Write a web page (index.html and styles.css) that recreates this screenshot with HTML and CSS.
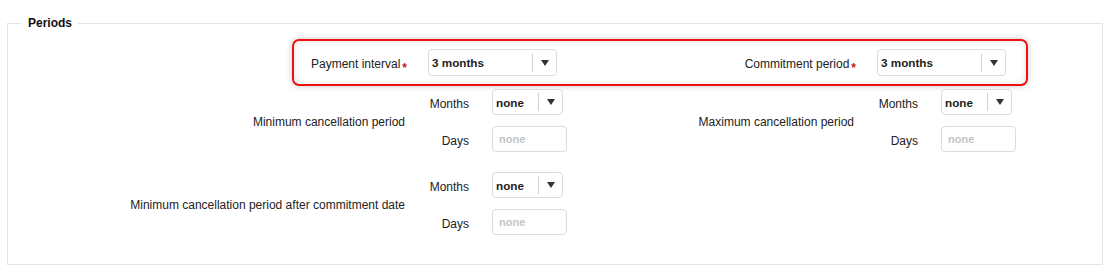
FILE: index.html
```html
<!DOCTYPE html>
<html>
    <head>
        <title>Periods</title>
        <meta charset="UTF-8">
        <meta name="viewport" content="width=device-width, initial-scale=1.0">
        <link rel="stylesheet" href="styles.css">
    </head>
    <body>

        <fieldset class="periods">
            <legend>Periods</legend>

            <div class="highlight">
                <div class="field">
                    <label class="field-label">Payment interval<span class="req">*</span></label>
                    <div class="select wide">
                        <span class="select-value">3 months</span>
                        <span class="select-arrow"></span>
                    </div>
                </div>
                <div class="field">
                    <label class="field-label">Commitment period<span class="req">*</span></label>
                    <div class="select wide">
                        <span class="select-value">3 months</span>
                        <span class="select-arrow"></span>
                    </div>
                </div>
            </div>

            <div class="ranges">
                <div class="range">
                    <div class="range-label">Minimum cancellation period</div>
                    <div class="range-parts">
                        <div class="part">
                            <span class="part-label">Months</span>
                            <div class="select narrow">
                                <span class="select-value">none</span>
                                <span class="select-arrow"></span>
                            </div>
                        </div>
                        <div class="part">
                            <span class="part-label">Days</span>
                            <input class="days" type="text" placeholder="none">
                        </div>
                    </div>
                </div>

                <div class="range">
                    <div class="range-label">Maximum cancellation period</div>
                    <div class="range-parts">
                        <div class="part">
                            <span class="part-label">Months</span>
                            <div class="select narrow">
                                <span class="select-value">none</span>
                                <span class="select-arrow"></span>
                            </div>
                        </div>
                        <div class="part">
                            <span class="part-label">Days</span>
                            <input class="days" type="text" placeholder="none">
                        </div>
                    </div>
                </div>

                <div class="range">
                    <div class="range-label">Minimum cancellation period after commitment date</div>
                    <div class="range-parts">
                        <div class="part">
                            <span class="part-label">Months</span>
                            <div class="select narrow">
                                <span class="select-value">none</span>
                                <span class="select-arrow"></span>
                            </div>
                        </div>
                        <div class="part">
                            <span class="part-label">Days</span>
                            <input class="days" type="text" placeholder="none">
                        </div>
                    </div>
                </div>
            </div>
        </fieldset>

    </body>
</html>
```

FILE: styles.css
```css
body {
    margin: 0;
    background: #fff;
    font-family: "Liberation Sans", Arial, sans-serif;
    font-size: 12px;
    color: #222;
}

fieldset.periods {
    margin: 16px 11px 0 7px;
    padding: 9px 0 29px 0;
    border: 1px solid #e4e4e4;
    min-width: 0;
}

fieldset.periods > legend {
    margin-left: 13px;
    padding: 0 6px 0 7px;
    font-weight: bold;
    font-size: 12px;
    line-height: 14px;
    color: #111;
}

/* highlighted row */
.highlight {
    display: grid;
    grid-template-columns: 449px 263px;
    width: max-content;
    margin-left: 284px;
    padding: 8px 20px 8px 0;
    border: 2px solid #f01010;
    border-radius: 7px;
    box-shadow: 0 0 6px rgba(0, 0, 0, 0.22), inset 0 0 6px rgba(0, 0, 0, 0.12);
}

.field {
    display: flex;
    align-items: center;
}

.field-label {
    width: 113px;
    margin-right: 21px;
    padding-top: 3px;
    line-height: 14px;
    text-align: right;
    white-space: nowrap;
}

.req {
    margin-left: 2px;
    color: #d01010;
    font-weight: bold;
    font-size: 12px;
    line-height: 0;
    vertical-align: -4px;
}

/* selects */
.select {
    display: flex;
    align-items: center;
    box-sizing: border-box;
    height: 27px;
    border: 1px solid #dcdcdc;
    border-radius: 4px;
    background: #fff;
}

.select.wide { width: 129px; }
.select.narrow { width: 71px; height: 26px; }

.select-value {
    flex: 1;
    padding-left: 3px;
    font-weight: bold;
    font-size: 11.7px;
    color: #1e1e1e;
}

.select-arrow {
    display: flex;
    align-items: center;
    justify-content: center;
    width: 23px;
    height: 18px;
    border-left: 1px solid #d0d0d0;
}

.select-arrow::after {
    content: "";
    border-top: 6px solid #333;
    border-left: 4px solid transparent;
    border-right: 4px solid transparent;
}

/* cancellation periods */
.ranges {
    display: grid;
    grid-template-columns: 449px 449px;
    row-gap: 20px;
    margin: 3px 0 0 112px;
}

.range {
    display: flex;
    align-items: center;
}

.range-label {
    width: 285px;
    padding-top: 3px;
    text-align: right;
    white-space: nowrap;
}

.range-parts {
    display: flex;
    flex-direction: column;
    gap: 11px;
}

.part {
    display: flex;
    align-items: center;
}

.part-label {
    width: 64px;
    margin-right: 23px;
    padding-top: 3px;
    text-align: right;
}

input.days {
    box-sizing: border-box;
    width: 75px;
    height: 26px;
    margin: 0;
    padding: 0 6px;
    border: 1px solid #dcdcdc;
    border-radius: 4px;
    font-family: "Liberation Sans", Arial, sans-serif;
    font-size: 11px;
    font-weight: bold;
    outline: none;
}

input.days::placeholder {
    color: #c4c4c4;
}
```
